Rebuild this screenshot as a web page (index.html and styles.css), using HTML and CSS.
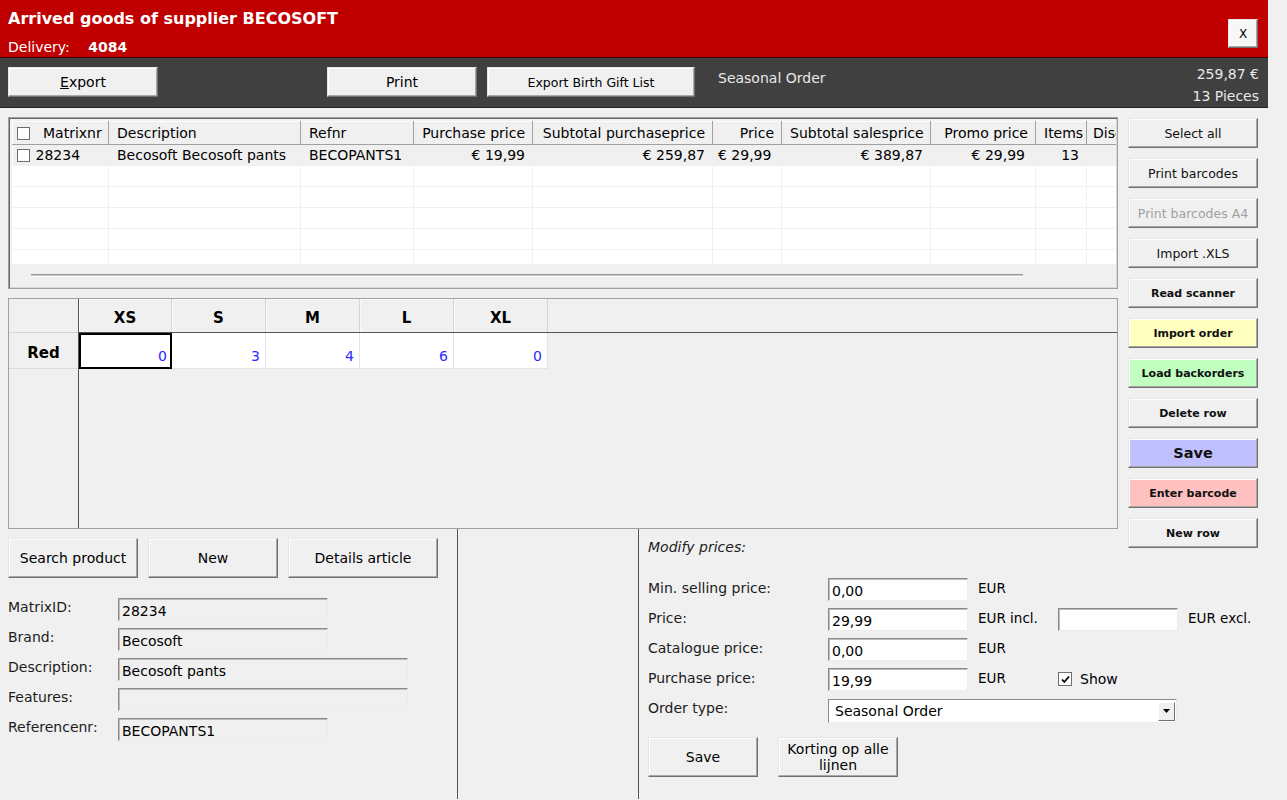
FILE: index.html
```html
<!DOCTYPE html>
<html lang="en">
<head>
    <meta charset="UTF-8">
    <title>Arrived goods of supplier BECOSOFT</title>
    <link rel="stylesheet" href="styles.css">
</head>
<body>
<div class="window">
    <header class="titlebar">
        <div>
            <div class="title">Arrived goods of supplier BECOSOFT</div>
            <div class="delivery">Delivery: <b>4084</b></div>
        </div>
        <button class="btn close-btn">X</button>
    </header>

    <div class="toolbar">
        <button class="btn tb-btn tb-export"><u>E</u>xport</button>
        <button class="btn tb-btn tb-print">Print</button>
        <button class="btn tb-btn tb-gift">Export Birth Gift List</button>
        <span class="order-kind">Seasonal Order</span>
        <div class="totals">
            <div>259,87 &euro;</div>
            <div>13 Pieces</div>
        </div>
    </div>

    <div class="workarea">
        <div class="grids">
            <div class="list-box">
                <div class="list-wrap">
                    <table class="list">
                        <colgroup>
                            <col style="width:96px"><col style="width:192px"><col style="width:113px">
                            <col style="width:119px"><col style="width:180px"><col style="width:69px">
                            <col style="width:149px"><col style="width:105px"><col style="width:51px">
                            <col style="width:60px">
                        </colgroup>
                        <thead>
                            <tr>
                                <th><span class="chk"></span>Matrixnr</th>
                                <th>Description</th>
                                <th>Refnr</th>
                                <th class="r">Purchase price</th>
                                <th class="r">Subtotal purchaseprice</th>
                                <th class="r">Price</th>
                                <th class="r">Subtotal salesprice</th>
                                <th class="r">Promo price</th>
                                <th class="r">Items</th>
                                <th class="last">Discount</th>
                            </tr>
                        </thead>
                        <tbody>
                            <tr class="sel">
                                <td class="first"><span class="chk"></span>28234</td>
                                <td>Becosoft Becosoft pants</td>
                                <td>BECOPANTS1</td>
                                <td class="r">&euro; 19,99</td>
                                <td class="r">&euro; 259,87</td>
                                <td class="price">&euro; 29,99</td>
                                <td class="r">&euro; 389,87</td>
                                <td class="r promo">&euro; 29,99</td>
                                <td class="r">13</td>
                                <td></td>
                            </tr>
                            <tr><td></td><td></td><td></td><td></td><td></td><td></td><td></td><td></td><td></td><td></td></tr>
                            <tr><td></td><td></td><td></td><td></td><td></td><td></td><td></td><td></td><td></td><td></td></tr>
                            <tr><td></td><td></td><td></td><td></td><td></td><td></td><td></td><td></td><td></td><td></td></tr>
                            <tr><td></td><td></td><td></td><td></td><td></td><td></td><td></td><td></td><td></td><td></td></tr>
                            <tr><td></td><td></td><td></td><td></td><td></td><td></td><td></td><td></td><td></td><td></td></tr>
                        </tbody>
                    </table>
                </div>
                <div class="hscroll"><div class="hscroll-bar"></div></div>
            </div>

            <div class="size-box">
                <div class="size-head-col">
                    <div class="corner"></div>
                    <div class="rowhead">Red</div>
                </div>
                <div class="size-main">
                    <div class="size-hdr">
                        <div class="size-cell xs">XS</div>
                        <div class="size-cell">S</div>
                        <div class="size-cell">M</div>
                        <div class="size-cell">L</div>
                        <div class="size-cell">XL</div>
                    </div>
                    <div class="size-row">
                        <div class="qty xs focus">0</div>
                        <div class="qty">3</div>
                        <div class="qty">4</div>
                        <div class="qty">6</div>
                        <div class="qty">0</div>
                    </div>
                </div>
            </div>
        </div>

        <div class="side-buttons">
            <button class="btn side-btn">Select all</button>
            <button class="btn side-btn">Print barcodes</button>
            <button class="btn side-btn disabled">Print barcodes A4</button>
            <button class="btn side-btn">Import .XLS</button>
            <button class="btn side-btn bold">Read scanner</button>
            <button class="btn side-btn bold yellow">Import order</button>
            <button class="btn side-btn bold green">Load backorders</button>
            <button class="btn side-btn bold">Delete row</button>
            <button class="btn side-btn bold blue big">Save</button>
            <button class="btn side-btn bold pink">Enter barcode</button>
            <button class="btn side-btn bold">New row</button>
        </div>
    </div>

    <div class="bottom">
        <div class="panel article">
            <div class="article-buttons">
                <button class="btn big-btn w130">Search product</button>
                <button class="btn big-btn w130">New</button>
                <button class="btn big-btn w150">Details article</button>
            </div>
            <div class="article-form">
                <div class="field-row"><label>MatrixID:</label><input class="ro w210" value="28234" readonly></div>
                <div class="field-row"><label>Brand:</label><input class="ro w210" value="Becosoft" readonly></div>
                <div class="field-row"><label>Description:</label><input class="ro w290" value="Becosoft pants" readonly></div>
                <div class="field-row"><label>Features:</label><input class="ro w290" value="" readonly></div>
                <div class="field-row"><label>Referencenr:</label><input class="ro w210" value="BECOPANTS1" readonly></div>
            </div>
        </div>
        <div class="panel blank"></div>
        <div class="panel prices">
            <div class="prices-title">Modify prices:</div>
            <div class="price-form">
                <div class="price-row">
                    <label>Min. selling price:</label>
                    <input class="edit w140" value="0,00">
                    <span class="unit">EUR</span>
                </div>
                <div class="price-row">
                    <label>Price:</label>
                    <input class="edit w140" value="29,99">
                    <span class="unit">EUR incl.</span>
                    <input class="edit w120" value="">
                    <span class="unit unit-excl">EUR excl.</span>
                </div>
                <div class="price-row">
                    <label>Catalogue price:</label>
                    <input class="edit w140" value="0,00">
                    <span class="unit">EUR</span>
                </div>
                <div class="price-row">
                    <label>Purchase price:</label>
                    <input class="edit w140" value="19,99">
                    <span class="unit">EUR</span>
                    <span class="show-box">
                        <span class="check"><svg width="11" height="11" viewBox="0 0 11 11"><path d="M2 5.5 L4.3 8 L9 2.5" fill="none" stroke="#000" stroke-width="1.8"/></svg></span>
                        Show
                    </span>
                </div>
                <div class="price-row">
                    <label>Order type:</label>
                    <div class="select">
                        <span>Seasonal Order</span>
                        <span class="arrow"><svg width="7" height="4" viewBox="0 0 7 4"><path d="M0 0 H7 L3.5 4 Z" fill="#000"/></svg></span>
                    </div>
                </div>
            </div>
            <div class="price-buttons">
                <button class="btn big-btn w110">Save</button>
                <button class="btn big-btn w120 two-line">Korting op alle lijnen</button>
            </div>
        </div>
    </div>
</div>
</body>
</html>
```

FILE: styles.css
```css
body {
    margin: 0;
    background-color: #f0f0f0;
    font-family: "DejaVu Sans", Verdana, sans-serif;
    font-size: 14px;
    color: #000;
}
.window {
    width: 1268px;
    height: 800px;
    overflow: hidden;
}
button, input {
    font-family: inherit;
    font-size: inherit;
    color: inherit;
}

/* title bar */
.titlebar {
    display: flex;
    justify-content: space-between;
    height: 58px;
    box-sizing: border-box;
    padding: 7px 10px 0 8px;
    background-color: #c00000;
    border-bottom: 1px solid #3a0000;
    color: #fff;
}
.title {
    font-size: 16px;
    font-weight: bold;
    line-height: 24px;
}
.delivery {
    margin-top: 6px;
    line-height: 20px;
}
.delivery b {
    margin-left: 14px;
}
.btn {
    background-color: #f0f0f0;
    border: 1px solid;
    border-color: #e6e6e6 #707070 #707070 #e6e6e6;
    box-shadow: inset -1px -1px 0 #a8a8a8, inset 1px 1px 0 #fff;
    padding: 0;
    color: #000;
    cursor: pointer;
}
.close-btn {
    width: 30px;
    height: 29px;
    margin-top: 12px;
    font-size: 12px;
    background-color: #f7f7f7;
}

/* toolbar */
.toolbar {
    display: flex;
    align-items: flex-start;
    height: 49px;
    padding: 0 9px 0 8px;
    background-color: #404040;
    border-bottom: 1px solid #222;
    color: #e8e8e8;
}
.tb-btn {
    height: 30px;
    margin-top: 9px;
}
.tb-export {
    width: 150px;
}
.tb-print {
    width: 150px;
    margin-left: 169px;
}
.tb-gift {
    width: 208px;
    margin-left: 10px;
    font-size: 12.5px;
}
.order-kind {
    margin: 9px 0 0 23px;
    line-height: 18px;
    padding-top: 2px;
}
.totals {
    margin: 5px 0 0 auto;
    text-align: right;
    line-height: 22px;
}

/* work area */
.workarea {
    display: flex;
    align-items: flex-start;
    padding: 9px 0 0 8px;
}
.grids {
    width: 1110px;
}
.list-box {
    height: 172px;
    box-sizing: border-box;
    border: 1px solid #a0a0a0;
    box-shadow: inset 1px 1px 0 #696969, inset -1px -1px 0 #d8d8d8;
    padding: 3px 0 0 3px;
    overflow: hidden;
}
.list-wrap {
    width: 1104px;
    height: 143px;
    overflow: hidden;
    background-color: #f0f0f0;
}
.list {
    table-layout: fixed;
    width: 1134px;
    border-collapse: collapse;
    background-color: #fff;
}
.list th, .list td {
    white-space: nowrap;
    overflow: hidden;
    padding: 0 7px 0 8px;
    text-align: left;
    font-weight: normal;
}
.list th {
    height: 22px;
    background-color: #f0f0f0;
    border-top: 1px solid #fff;
    border-left: 1px solid #fff;
    border-right: 1px solid #a0a0a0;
    border-bottom: 1px solid #a0a0a0;
}
.list td {
    height: 20px;
    border-right: 1px solid #f0f0f0;
    border-bottom: 1px solid #f0f0f0;
}
.list th.last {
    padding-left: 6px;
}
.list tr.sel td {
    background-color: #f0f0f0;
    border-color: #f0f0f0;
}
.list .r {
    text-align: right;
}
.list td.price {
    padding-left: 5px;
}
.list td.promo {
    padding-right: 10px;
}
.list .first, .list th:first-child {
    padding-left: 4px;
}
.chk {
    display: inline-block;
    width: 13px;
    height: 13px;
    box-sizing: border-box;
    border: 1px solid #6e6e6e;
    background-color: #fff;
    vertical-align: -2px;
    margin-right: 13px;
}
.list td .chk {
    margin-right: 6px;
}
.hscroll {
    height: 23px;
    padding-top: 10px;
    box-sizing: border-box;
}
.hscroll-bar {
    width: 992px;
    margin-left: 19px;
    height: 3px;
    box-sizing: border-box;
    border-top: 1px solid #9a9a9a;
    border-bottom: 1px solid #fff;
    background-color: #c8c8c8;
}

/* size grid */
.size-box {
    display: flex;
    height: 231px;
    margin-top: 9px;
    box-sizing: border-box;
    border: 1px solid #a0a0a0;
}
.size-head-col {
    width: 70px;
    box-sizing: border-box;
    border-right: 1px solid #555;
}
.corner {
    height: 34px;
    box-sizing: border-box;
    border-bottom: 1px solid #d4d4d4;
}
.rowhead {
    height: 36px;
    box-sizing: border-box;
    border-bottom: 1px solid #dcdcdc;
    padding-top: 3px;
    font-size: 15px;
    font-weight: bold;
    text-align: center;
    line-height: 34px;
}
.size-main {
    flex: 1;
}
.size-hdr {
    display: flex;
    height: 34px;
    box-sizing: border-box;
    border-bottom: 1px solid #555;
}
.size-cell {
    width: 94px;
    box-sizing: border-box;
    border-right: 1px solid #d4d4d4;
    box-shadow: inset 1px 1px 0 #fafafa;
    padding-top: 2px;
    font-size: 15px;
    font-weight: bold;
    text-align: center;
    line-height: 34px;
}
.size-cell.xs, .qty.xs {
    width: 93px;
}
.size-row {
    display: flex;
    height: 36px;
}
.qty {
    width: 94px;
    box-sizing: border-box;
    background-color: #fff;
    border-right: 1px solid #e4e4e4;
    border-bottom: 1px solid #e4e4e4;
    color: #2a2aff;
    text-align: right;
    padding: 15px 5px 0 0;
}
.qty.focus {
    border: 2px solid #000;
    padding: 13px 3px 0 0;
}

/* side buttons */
.side-buttons {
    display: flex;
    flex-direction: column;
    gap: 10px;
    width: 130px;
    margin: 1px 0 -20px 10px;
}
.side-btn {
    height: 30px;
    font-size: 12.5px;
    color: #111;
}
.side-btn.bold {
    font-size: 11px;
    font-weight: bold;
}
.side-btn.big {
    font-size: 14.5px;
}
.side-btn.disabled {
    color: #a0a0a0;
}
.yellow {
    background-color: #ffffc0;
}
.green {
    background-color: #c0ffc0;
}
.blue {
    background-color: #c0c0ff;
}
.pink {
    background-color: #ffc0c0;
}

/* bottom panels */
.bottom {
    display: flex;
    height: 270px;
}
.panel {
    box-sizing: border-box;
}
.article {
    width: 458px;
    border-right: 1px solid #555;
    padding: 9px 0 0 8px;
}
.blank {
    width: 181px;
    border-right: 1px solid #555;
}
.prices {
    flex: 1;
    padding: 9px 0 0 9px;
}
.article-buttons {
    display: flex;
    gap: 10px;
}
.big-btn {
    height: 40px;
}
.w110 { width: 110px; }
.w120 { width: 120px; }
.w130 { width: 130px; }
.w140 { width: 140px; }
.w150 { width: 150px; }
.w210 { width: 210px; }
.w290 { width: 290px; }
.article-form {
    margin-top: 20px;
}
.field-row {
    display: flex;
    align-items: flex-start;
    height: 23px;
    margin-bottom: 7px;
}
.field-row label {
    width: 110px;
    padding-top: 1px;
    line-height: 17px;
    color: #1c1c1c;
}
.ro, .edit {
    height: 23px;
    box-sizing: border-box;
    padding: 3px 3px 0;
    border: 1px solid;
    border-color: #8a8a8a #ececec #ececec #8a8a8a;
    box-shadow: inset 1px 1px 0 #bcbcbc;
    outline: none;
}
.ro {
    background-color: #f0f0f0;
}
.edit {
    background-color: #fff;
    margin-top: 1px;
}
.prices-title {
    font-style: italic;
    line-height: 18px;
    color: #1c1c1c;
}
.price-form {
    margin-top: 21px;
}
.price-row {
    display: flex;
    align-items: flex-start;
    height: 23px;
    margin-bottom: 7px;
}
.price-row label {
    width: 180px;
    padding-top: 3px;
    line-height: 17px;
    color: #1c1c1c;
}
.unit {
    width: 80px;
    padding: 3px 0 0 10px;
    line-height: 17px;
    font-size: 13.5px;
}
.unit.unit-excl {
    width: auto;
}
.show-box {
    display: flex;
    align-items: center;
    gap: 8px;
    margin-top: 4px;
}
.check {
    display: inline-flex;
    align-items: center;
    justify-content: center;
    width: 14px;
    height: 14px;
    box-sizing: border-box;
    border: 1px solid #6e6e6e;
    background-color: #fff;
}
.select {
    display: flex;
    justify-content: space-between;
    align-items: center;
    width: 349px;
    height: 24px;
    margin-top: 2px;
    box-sizing: border-box;
    padding: 0 1px 0 6px;
    background-color: #fff;
    border: 1px solid;
    border-color: #8a8a8a #ececec #ececec #8a8a8a;
}
.arrow {
    display: flex;
    align-items: center;
    justify-content: center;
    width: 17px;
    height: 19px;
    box-sizing: border-box;
    background-color: #f0f0f0;
    border: 1px solid;
    border-color: #fff #707070 #707070 #fff;
}
.price-buttons {
    display: flex;
    gap: 20px;
    margin-top: 17px;
}
.two-line {
    line-height: 16px;
    padding: 0 6px;
}
```
